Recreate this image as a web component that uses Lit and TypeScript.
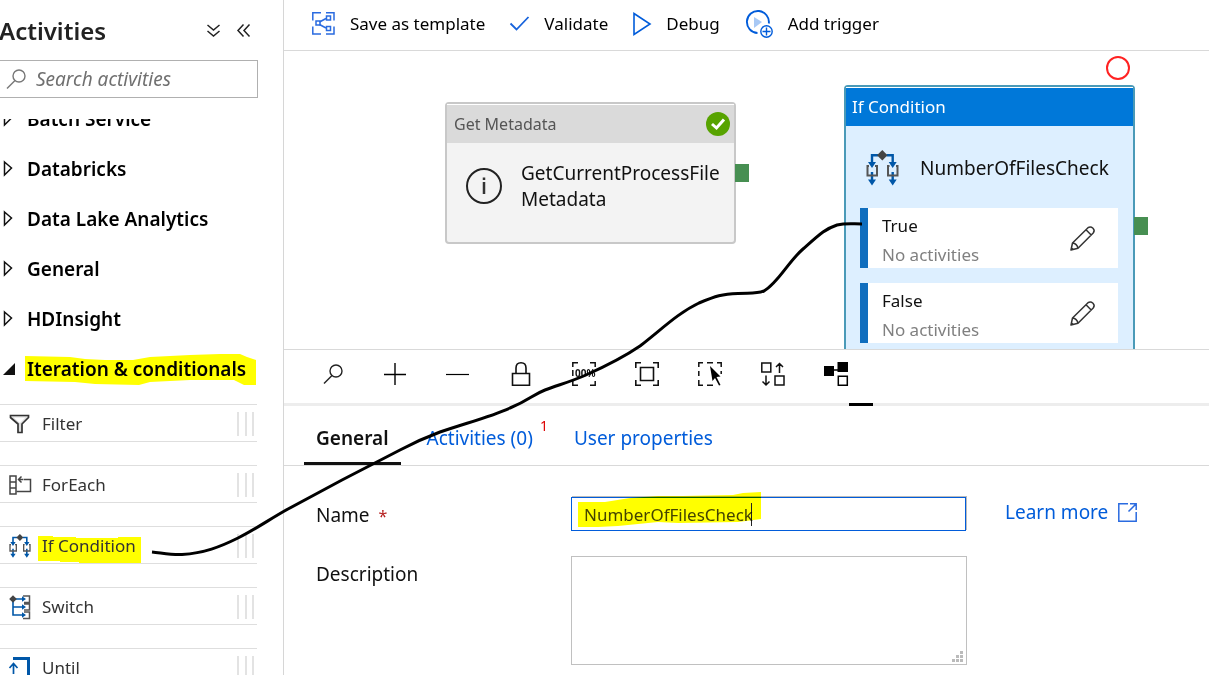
import { LitElement, html, svg, css } from "lit";
import { customElement, state } from "lit/decorators.js";

const ifGlyph = svg`
  <path d="M12 5.300H6V13M20.500 5.300H26.700V13M6 22V31M26.700 22V31" fill="none" stroke="#0057a8" stroke-width="2.400"/>
  <path d="M3 16H1.500V25.500H11V16H9M23.500 16H22V25.500H31.500V16H30" fill="none" stroke="#555" stroke-width="2"/>
  <path d="M2 12H10L6 18ZM22.700 12H30.700L26.700 18ZM2 29.500H10L6 35.500ZM22.700 29.500H30.700L26.700 35.500Z" fill="#0057a8"/>
  <path d="M16.300 0L21.500 5.300L16.300 10.500L11 5.300Z" fill="#444"/>`;

const itemIcons: Record<string, unknown> = {
  Filter: svg`<path d="M1.500 3.500H19.500V5.500L13 12V20.500H9V12L1.500 5.500Z" fill="#ddd" stroke="#333" stroke-width="1.700"/><path d="M4.500 5.500H16.500L11 11Z" fill="#fff"/>`,
  ForEach: svg`<path d="M1 3H7V21H1ZM1 9H7M1 15H7" fill="none" stroke="#444" stroke-width="1.500"/><path d="M14.500 6.500H21.500V18.500H7.500M9.500 6.500H14M12.500 3.500L9.500 6.500L12.500 9.500" fill="none" stroke="#444" stroke-width="1.500"/>`,
  Switch: svg`<path d="M4 4V20H15M4 12H15M6 4H15" fill="none" stroke="#0057a8" stroke-width="1.600"/><path d="M4 .2L7.800 4L4 7.800L.2 4Z" fill="#444"/><path d="M13 1.200L17 4L13 6.800ZM13 9.200L17 12L13 14.800ZM13 17.200L17 20L13 22.800Z" fill="#0057a8"/><path d="M14 1H20.500V7.500H15M15 9H20.500V15H15M15 17H20.500V23.500H14" fill="none" stroke="#555" stroke-width="1.500"/>`,
  Until: svg`<path d="M4 2.500H19.500V22H12" fill="none" stroke="#0057a8" stroke-width="3"/><path d="M4.500 18V8M.5 12L4.500 7.500L8.500 12" fill="none" stroke="#0057a8" stroke-width="1.700"/><circle cx="5" cy="21" r="2" fill="#444"/>`,
};

const magnifier = (color: string) => svg`
  <circle cx="13" cy="7" r="6" fill="none" stroke=${color} stroke-width="1.400"/>
  <path d="M9 11.500L1 19.500" stroke=${color} stroke-width="1.400"/>`;

@customElement("app-root")
export class AppRoot extends LitElement {
  @state() private groups = ["Batch Service", "Databricks", "Data Lake Analytics", "General", "HDInsight"];
  @state() private items = ["Filter", "ForEach", "If Condition", "Switch", "Until"];

  static styles = css`
    :host {
      display: block;
      position: relative;
      height: 100vh;
      overflow: hidden;
      background: #fff;
      color: #111;
      font-family: "Noto Sans", "Open Sans", sans-serif;
      font-size: 17px;
      line-height: 24px;
    }
    * { box-sizing: border-box; }
    svg { display: block; flex: none; overflow: visible; }
    button, input, textarea { font: inherit; color: inherit; margin: 0; }
    button { background: none; border: 0; padding: 0; text-align: left; white-space: nowrap; }
    a { color: #015cda; text-decoration: none; }
    .shell { display: flex; height: 100%; }
    .side {
      flex: none;
      width: 284px;
      display: flex;
      flex-direction: column;
      border-right: 1px solid #d6d6d6;
    }
    .side-head { display: flex; align-items: center; flex: none; height: 60px; padding-right: 33px; gap: 17px; }
    .side-head h1 { margin: 0 auto 0 -1px; padding-top: 2px; font-size: 24px; font-weight: 600; color: #222; }
    .search {
      display: flex;
      align-items: center;
      gap: 10px;
      flex: none;
      height: 38px;
      margin-right: 25px;
      padding-left: 6px;
      border: 1px solid #b0b0b0;
      border-left: 0;
    }
    .search input { flex: 1; min-width: 0; border: 0; padding: 0; outline: 0; font-size: 19px; font-style: italic; background: none; }
    .search input::placeholder { color: #707070; opacity: 1; }
    .list { flex: 1; min-height: 0; margin: 21px 26px 0 0; overflow: hidden; }
    .groups { margin-top: -25px; }
    .group {
      display: flex;
      align-items: center;
      gap: 12px;
      width: 100%;
      height: 50px;
      padding-left: 3px;
      font-size: 19px;
      font-weight: 600;
      color: #000;
    }
    .mark { position: relative; z-index: 0; isolation: isolate; }
    .mark svg { position: absolute; z-index: -1; }
    .mark-group { left: -2px; top: -3px; }
    .mark-item { left: -4px; top: 2px; }
    .items { display: flex; flex-direction: column; gap: 23px; padding-top: 10px; }
    .item {
      display: flex;
      align-items: center;
      gap: 11px;
      height: 38px;
      padding: 1px 3px 0 9px;
      border: solid #dedede;
      border-width: 1px 0;
      color: #333;
    }
    .item svg { width: 22px; }
    .item .mark svg { width: 103px; }
    .grip { margin-left: auto; width: 17px; height: 24px; border: solid #e3e3e3; border-width: 0 2px; display: flex; justify-content: center; }
    .grip::before { content: ""; width: 2px; background: #e3e3e3; }
    .main { flex: 1; min-width: 0; display: flex; flex-direction: column; }
    .commands { display: flex; align-items: center; flex: none; height: 51px; padding: 0 28px 3px; gap: 25px; border-bottom: 1px solid #d9d9d9; color: #000; }
    .command { display: flex; align-items: center; gap: 15px; }
    .canvas { position: relative; flex: none; height: 298px; overflow: hidden; }
    .node { position: absolute; width: 291px; border: 2px solid #c8c8c8; border-radius: 4px; background: #f3f3f3; padding-top: 1px; }
    .node-meta { left: 161px; top: 51px; height: 142px; }
    .node-if { left: 560px; top: 34px; height: 320px; border-color: #4a9ab8; background: #ddefff; }
    .node-head { display: flex; align-items: center; justify-content: space-between; height: 38px; padding: 0 4px 0 7px; background: #dadada; color: #555; font-size: 16px; box-shadow: 0 -1px 0 #fff; }
    .node-if .node-head { background: #0078d9; color: #fff; padding-left: 6px; font-size: 17px; }
    .node-body { display: flex; align-items: center; gap: 19px; padding: 17px 8px 0 19px; font-size: 19px; line-height: 26px; }
    .node-if .node-body { gap: 21px; height: 82px; padding: 2px 18px 0 20px; }
    .port { position: absolute; right: -15px; width: 14px; height: 18px; background: #478f52; }
    .node-meta .port { top: 60px; }
    .node-if .port { top: 130px; }
    .fault { position: absolute; left: 822px; top: 5px; width: 24px; height: 24px; border: 2px solid #f22; border-radius: 50%; }
    .branches { display: flex; flex-direction: column; gap: 15px; padding: 0 15px 0 14px; }
    .branch { display: flex; align-items: center; justify-content: space-between; height: 60px; padding: 0 23px 0 14px; border-left: 8px solid #106ebe; background: #fff; line-height: 29px; }
    .branch p { margin: 0; padding-top: 3px; color: #808080; }
    .branch strong { display: block; font-weight: 400; color: #111; }
    .tools { position: relative; display: flex; align-items: center; flex: none; height: 57px; padding: 0 38px 6px; gap: 39px; border: solid #ededed; border-width: 1px 0 3px; border-top-color: #d9d9d9; }
    .handle { position: absolute; left: 565px; bottom: -3px; width: 24px; height: 3px; background: #000; }
    .tabs { display: flex; flex: none; height: 60px; padding: 0 20px; gap: 26px; border-bottom: 1px solid #d9d9d9; font-size: 19px; color: #015cda; }
    .tab { height: 59px; padding: 8px 0 0; border-bottom: 3px solid transparent; }
    .tab-on { padding: 8px 12px 0; border-bottom-color: #111; color: #111; font-weight: 600; }
    .tab sup { margin: 0 0 0 7px; font-size: 14px; line-height: 0; vertical-align: 14px; color: #d00; }
    .form { display: grid; grid-template-columns: 255px minmax(200px, 396px) auto; justify-content: start; row-gap: 25px; padding: 31px 20px 0 32px; font-size: 19px; }
    .form label { padding-top: 6px; }
    .req { color: #b51c1c; margin-left: 4px; font-size: 16px; }
    .field { position: relative; }
    .field input { display: block; width: calc(100% - 1px); height: 34px; padding: 0 12px; border: 1px solid #015cda; border-radius: 0; box-shadow: 1px -1px 0 #bbb; outline: 0; font-size: 17px; color: #444; background: #fff; }
    .field textarea { display: block; width: 100%; height: 109px; border: 1px solid #c0c0c0; border-radius: 0; resize: none; outline: 0; }
    .stain { position: absolute; left: 7px; top: -5px; mix-blend-mode: multiply; }
    .dots { position: absolute; right: 4px; bottom: 3px; }
    .learn { display: flex; align-items: center; gap: 10px; height: 30px; margin-left: 38px; }
    .ink { position: absolute; left: 0; top: 0; pointer-events: none; }
  `;

  private pencil() {
    return html`<button aria-label="Edit"><svg width="25" height="25" viewBox="0 0 25 25" fill="none" stroke="#333" stroke-width="1.500" stroke-linejoin="round">
      <path d="M1 24L2.500 17L18 1.700Q20.500 0 23 2.200Q25.200 4.500 23.200 7L8 22.300ZM2.500 17Q7 17.500 8 22.300M16 3.800L21.200 9M1.500 22L3.500 23.500"/></svg></button>`;
  }

  private item(name: string) {
    const icon = name === "If Condition"
      ? html`<svg width="22" height="24" viewBox="0 0 33 36">${ifGlyph}</svg>`
      : html`<svg width="22" height="24" viewBox="0 0 22 24">${itemIcons[name]}</svg>`;
    const label = name === "If Condition"
      ? html`<span class="mark"><svg class="mark-item" width="103" height="27" viewBox="0 0 103 27"><path d="M0 0H15V1H38V2H80V1H103V27H41V26H22V25H0Z" fill="#ff0"/></svg>${name}</span>`
      : html`<span>${name}</span>`;
    return html`<div class="item">${icon}${label}<span class="grip"></span></div>`;
  }

  private branch(name: string) {
    return html`<div class="branch"><p><strong>${name}</strong>No activities</p>${this.pencil()}</div>`;
  }

  render() {
    return html`
      <div class="shell">
        <aside class="side">
          <div class="side-head">
            <h1>Activities</h1>
            <button aria-label="Expand all"><svg width="13" height="13" viewBox="0 0 13 13" fill="none" stroke="#222" stroke-width="1.500"><path d="M.5 1L6.500 6L12.500 1M.5 7L6.500 12L12.500 7"/></svg></button>
            <button aria-label="Collapse"><svg width="13" height="13" viewBox="0 0 13 13" fill="none" stroke="#222" stroke-width="1.500"><path d="M6.500 .5L1 6.500L6.500 12.500M12.500 .5L7 6.500L12.500 12.500"/></svg></button>
          </div>
          <div class="search">
            <svg width="20" height="20" viewBox="0 0 20 20">${magnifier("#777")}</svg>
            <input type="text" placeholder="Search activities" aria-label="Search activities" />
          </div>
          <div class="list">
            <div class="groups">
              ${this.groups.map((g) => html`<button class="group">
                <svg width="12" height="16" viewBox="0 0 12 16"><path d="M1.500 1L8.500 7L1.500 14Z" fill="none" stroke="#111" stroke-width="1.500"/></svg>${g}</button>`)}
              <button class="group">
                <svg width="12" height="12" viewBox="0 0 12 12"><path d="M12 0V12H0Z" fill="#111"/></svg>
                <span class="mark"><svg class="mark-group" width="231" height="31" viewBox="0 0 231 31"><path d="M0 2L45 3L60 5L80 6H108L125 3L165 1L195 0H215L222 3L231 6V31H219L209 26H165L125 28L114 31L70 30L50 28L0 27Z" fill="#ff0"/></svg>Iteration &amp; conditionals</span>
              </button>
            </div>
            <div class="items">${this.items.map((i) => this.item(i))}</div>
          </div>
        </aside>

        <main class="main">
          <div class="commands">
            <button class="command"><svg width="23" height="23" viewBox="0 0 23 23" fill="none" stroke="#2a6be0" stroke-width="1.500">
              <path d="M9 .8H.8V8.500M14 .8H22V8.500M.8 14.500V22H9M22 14.500V22H14M7.500 10L14 6.500M7.500 12.500L14 16"/><path d="M4 9H8V13H4ZM14.500 4H18.500V8H14.500ZM14.500 14.500H18.500V18.500H14.500Z"/></svg>Save as template</button>
            <button class="command"><svg width="19" height="15" viewBox="0 0 19 15"><path d="M.5 7.500L6.500 13.500L18.500 1" fill="none" stroke="#1763dc" stroke-width="1.800"/></svg>Validate</button>
            <button class="command"><svg width="18" height="24" viewBox="0 0 18 24"><path d="M1 1.500L17 12L1 22.500Z" fill="none" stroke="#015cda" stroke-width="1.600"/></svg>Debug</button>
            <button class="command"><svg width="28" height="28" viewBox="0 0 28 28" fill="none" stroke="#015cda">
              <path d="M12.500 23A11 11 0 1 1 23.800 13.500" stroke-width="1.900"/><path d="M9 7L17 12L9 18Z" fill="#a9c9f5" stroke="none"/><circle cx="21.500" cy="21.500" r="5.700" stroke-width="1.400"/><path d="M17.500 21.500H25.500M21.500 17.500V25.500" stroke-width="1.400"/></svg>Add trigger</button>
          </div>

          <section class="canvas">
            <article class="node node-meta">
              <div class="node-head">Get Metadata<svg width="24" height="24" viewBox="0 0 24 24"><circle cx="12" cy="12" r="12" fill="#57a300"/><path d="M6 12L10.500 16L18 7.500" fill="none" stroke="#fff" stroke-width="3"/></svg></div>
              <div class="node-body">
                <svg width="36" height="36" viewBox="0 0 36 36"><circle cx="18" cy="18" r="17" fill="none" stroke="#222" stroke-width="2"/><path d="M18 14V26M18 9.500V12" stroke="#333" stroke-width="2.500"/></svg>
                <span>GetCurrentProcessFile<br />Metadata</span>
              </div>
              <span class="port"></span>
            </article>
            <span class="fault"></span>
            <article class="node node-if">
              <div class="node-head">If Condition</div>
              <div class="node-body">
                <svg width="33" height="36" viewBox="0 0 33 36">${ifGlyph}</svg>
                <span>NumberOfFilesCheck</span>
              </div>
              <div class="branches">${this.branch("True")}${this.branch("False")}</div>
              <span class="port"></span>
            </article>
          </section>

          <div class="tools">
            <button aria-label="Search"><svg width="22" height="20" viewBox="0 0 20 20">${magnifier("#222")}</svg></button>
            <button aria-label="Zoom in"><svg width="24" height="24" viewBox="0 0 24 24"><path d="M1 12.500H23M12 1V23" stroke="#000" stroke-width="1.400"/></svg></button>
            <button aria-label="Zoom out"><svg width="24" height="24" viewBox="0 0 24 24"><path d="M0 12.500H23" stroke="#000" stroke-width="1.200"/></svg></button>
            <button aria-label="Lock"><svg width="24" height="24" viewBox="0 0 24 24" fill="none" stroke="#111" stroke-width="1.600"><path d="M3.500 11.500H20.500V23.200H3.500ZM7 11.500V6Q7 .8 12 .8T17 6V11.500"/></svg></button>
            <button aria-label="Zoom to 100%"><svg width="24" height="24" viewBox="0 0 24 24"><path d="M6 .8H.8V5M18 .8H23.200V5M6 23.200H.8V19M18 23.200H23.200V19M.8 8V14" fill="none" stroke="#111" stroke-width="1.500"/><text x="3" y="15" font-size="10" font-weight="700" fill="#111">00%</text></svg></button>
            <button aria-label="Zoom to fit"><svg width="24" height="24" viewBox="0 0 24 24" fill="none" stroke="#111" stroke-width="1.600"><path d="M6 .8H.8V6M18 .8H23.200V6M6 23.200H.8V18M18 23.200H23.200V18M5.500 5.500H18.500V18.500H5.500Z"/></svg></button>
            <button aria-label="Select"><svg width="24" height="24" viewBox="0 0 24 24"><path d="M5 .8H.8V5M9 .8H15M19 .8H23.200V5M.8 9V14M.8 18V23.200H5M9 23.200H15M23.200 9V12" fill="none" stroke="#111" stroke-width="1.500"/><path d="M12 4L22.500 14.500L18.500 15L22.500 23L21 23.500L17 16L14.500 19Z" fill="#000"/></svg></button>
            <button aria-label="Auto align"><svg width="24" height="24" viewBox="0 0 24 24" fill="none" stroke="#111" stroke-width="1.500"><path d="M.8 1H9.800V10H.8ZM14 14H23V23H14ZM18.500 11V1.500M15 5L18.500 1.500L22 5M5 13.500V23M1.500 19.500L5 23L8.500 19.500"/></svg></button>
            <button aria-label="Minimap"><svg width="24" height="24" viewBox="0 0 24 24"><path d="M0 4H10V14H0ZM13.500 0H24V10H13.500Z" fill="#000"/><path d="M10 8H14M14.300 14.300H23.300V23.300H14.300Z" fill="none" stroke="#000" stroke-width="1.500"/></svg></button>
            <span class="handle"></span>
          </div>

          <nav class="tabs">
            <button class="tab tab-on">General</button>
            <button class="tab">Activities (0)<sup>1</sup></button>
            <button class="tab">User properties</button>
          </nav>

          <form class="form">
            <label for="name">Name <span class="req">*</span></label>
            <div class="field">
              <input id="name" type="text" value="NumberOfFilesCheck" />
              <svg class="stain" width="184" height="36" viewBox="0 0 184 36"><path d="M0 10H27L52 6L80 4H105L155 3L165 1L183 0V27L160 30L100 31L80 30L40 34L20 35H0Z" fill="#ff0"/><path d="M173.500 11V34" stroke="#222"/></svg>
            </div>
            <a class="learn" href="#">Learn more<svg width="19" height="19" viewBox="0 0 19 19" fill="none" stroke="#2a6be0" stroke-width="1.500"><path d="M10 .8H.8V18.200H18.200V9M12 .8H18.200V7M18 1L10.500 8.500"/></svg></a>
            <label for="desc">Description</label>
            <div class="field">
              <textarea id="desc"></textarea>
              <svg class="dots" width="11" height="11" viewBox="0 0 11 11"><path d="M8 0H11V3H8ZM4 4H7V7H4ZM8 4H11V7H8ZM0 8H3V11H0ZM4 8H7V11H4ZM8 8H11V11H8Z" fill="#bbb"/></svg>
            </div>
          </form>
        </main>
      </div>
      <svg class="ink" width="864" height="560" viewBox="0 0 864 560">
        <path d="M152 552C162 553 171 555 182 554.500C204 553 220 547 238 538C256 529 270 519 288 509L342 480L400 450C415 442 424 438 440 432C466 423 490 417 510 408C530 400 532 395 545 390C558 385 570 382 586 375C606 366 624 357 640 346C662 329 678 313 699 303C716 296 722 294 738 293.500C752 293 757 294 764 291C778 283 788 262 803 249C820 234 825 229 837 225C846 223 852 224 862 224" fill="none" stroke="#000" stroke-width="3"/>
      </svg>`;
  }
}
